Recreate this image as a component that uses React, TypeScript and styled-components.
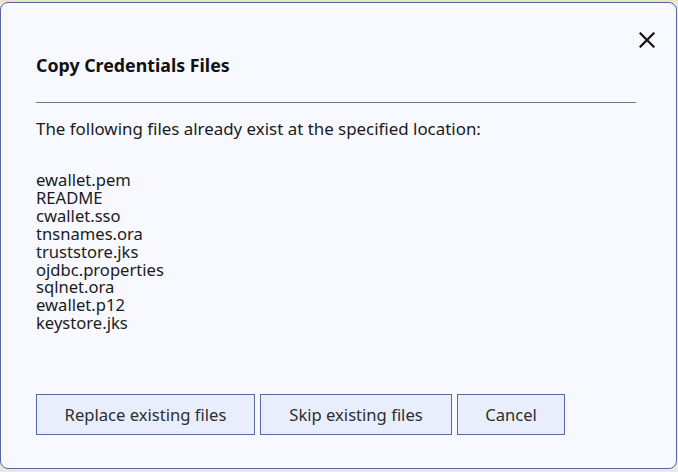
import styled, { createGlobalStyle } from "styled-components";

const GlobalStyle = createGlobalStyle`
  html, body {
    margin: 0;
    padding: 0;
    background: #e9e9e9;
  }
  body {
    font-family: "Noto Sans", "Open Sans", sans-serif;
    color: #1b1b1b;
  }
`;

const Page = styled.div`
  width: 678px;
  height: 472px;
  padding-top: 2px;
  box-sizing: border-box;
  border-top: 2px solid #efe3bf;
`;

const Dialog = styled.div`
  width: 677px;
  height: 467px;
  box-sizing: border-box;
  margin-top: -2px;
  background: #f7f9ff;
  border: 1px solid #56679c;
  border-radius: 8px;
  padding: 0 40px 0 35px;
  display: flex;
  flex-direction: column;
`;

const CloseRow = styled.div`
  display: flex;
  justify-content: flex-end;
  margin-right: -22px;
  padding-top: 26px;
  height: 22px;
`;

const CloseButton = styled.button`
  border: none;
  background: transparent;
  padding: 0;
  width: 22px;
  height: 22px;
  display: flex;
  align-items: center;
  justify-content: center;
  cursor: pointer;
`;

const Title = styled.h1`
  margin: 2px 0 0 0;
  font-size: 17.8px;
  font-weight: 700;
  line-height: 24px;
  color: #111;
`;

const Rule = styled.hr`
  margin: 25px 0 0 0;
  border: none;
  border-top: 1px solid #7a7a7a;
  height: 0;
`;

const Intro = styled.p`
  margin: 14px 0 0 0;
  font-size: 16.9px;
  line-height: 24px;
`;

const FileList = styled.ul`
  list-style: none;
  margin: 30px 0 0 0;
  padding: 0;
  font-size: 16.6px;
  line-height: 17.9px;
`;

const FileItem = styled.li`
  margin: 0;
`;

const Actions = styled.div`
  margin-top: auto;
  margin-bottom: 33px;
  display: flex;
  gap: 5px;
`;

const ActionButton = styled.button<{ $w: number }>`
  width: ${(p) => p.$w}px;
  height: 41px;
  box-sizing: border-box;
  background: #e8eefc;
  border: 1px solid #5a6a9e;
  border-radius: 0;
  font-family: "Noto Sans", "Open Sans", sans-serif;
  font-size: 16.6px;
  color: #2e2e2e;
  cursor: pointer;
`;

const files = [
  "ewallet.pem",
  "README",
  "cwallet.sso",
  "tnsnames.ora",
  "truststore.jks",
  "ojdbc.properties",
  "sqlnet.ora",
  "ewallet.p12",
  "keystore.jks",
];

export default function App() {
  return (
    <>
      <GlobalStyle />
      <Page>
        <Dialog>
          <CloseRow>
            <CloseButton aria-label="Close">
              <svg width="16" height="16" viewBox="0 0 16 16">
                <path d="M1.5 1.5 L14.5 14.5 M14.5 1.5 L1.5 14.5" stroke="#111" strokeWidth="2.2" strokeLinecap="square" />
              </svg>
            </CloseButton>
          </CloseRow>
          <Title>Copy Credentials Files</Title>
          <Rule />
          <Intro>The following files already exist at the specified location:</Intro>
          <FileList>
            {files.map((f) => (
              <FileItem key={f}>{f}</FileItem>
            ))}
          </FileList>
          <Actions>
            <ActionButton $w={219}>Replace existing files</ActionButton>
            <ActionButton $w={192}>Skip existing files</ActionButton>
            <ActionButton $w={108}>Cancel</ActionButton>
          </Actions>
        </Dialog>
      </Page>
    </>
  );
}
